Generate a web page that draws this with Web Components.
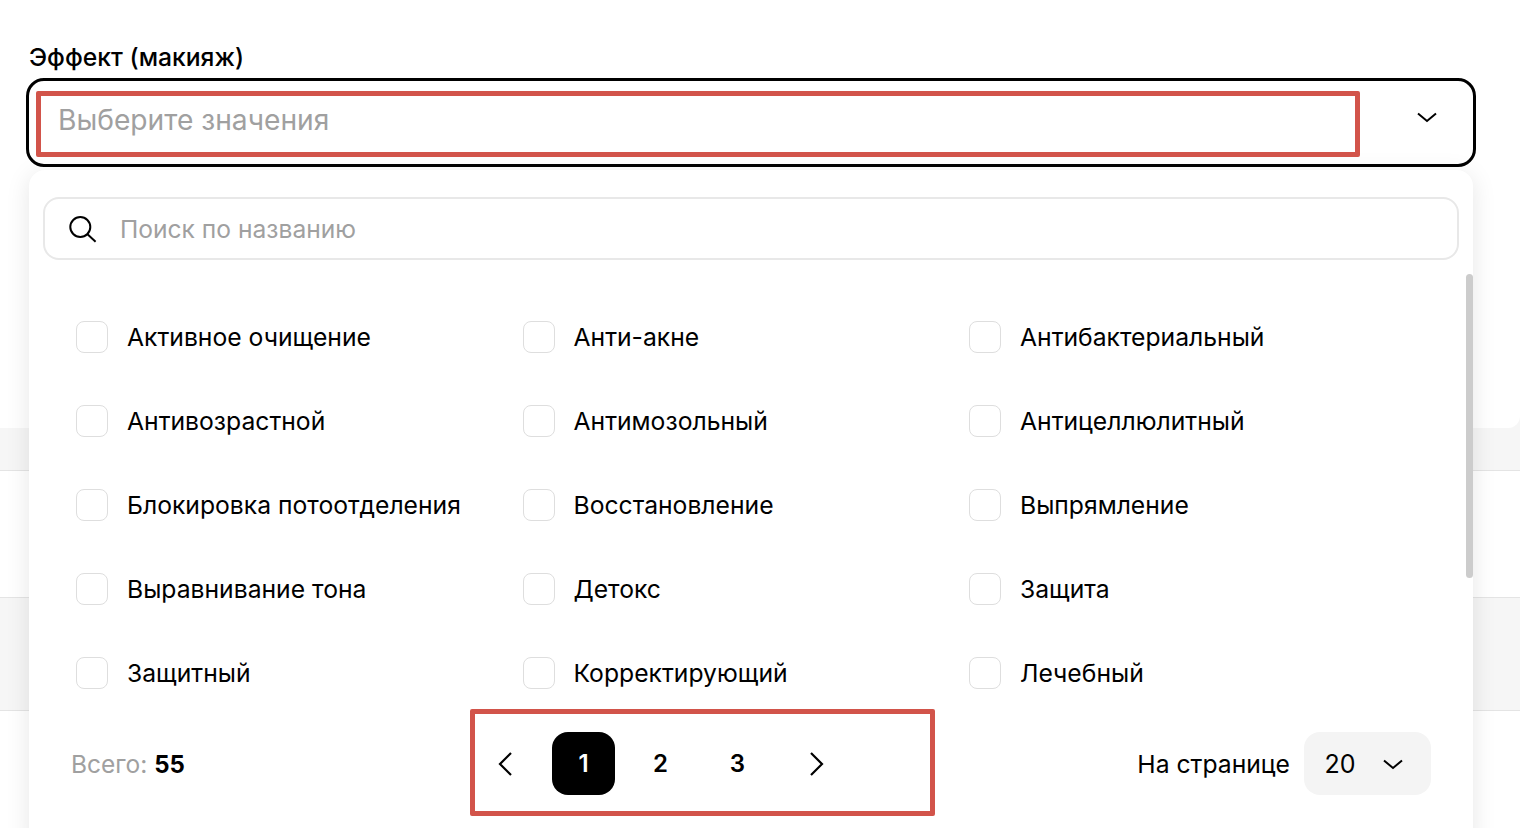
<!DOCTYPE html>
<html><head><meta charset="utf-8">
<style>
html,body{margin:0;padding:0;height:828px;overflow:hidden;background:#fff;font-family:Inter,"Liberation Sans",sans-serif;color:#000}
</style></head><body>
<template id="t-page"><style>
:host{display:block;position:relative;width:1520px;height:828px;overflow:hidden}
.bg{display:flex;flex-direction:column;padding-top:416px}
.c{height:12px;background:#f6f6f6}
.c div{height:12px;background:#fff;border-bottom-right-radius:12px}
.r{box-sizing:border-box}
.r1{height:43px;background:#f6f6f6;border-bottom:1px solid #e4e4e4}
.r2{height:127px;background:#fff;border-bottom:1px solid #e4e4e4}
.r3{height:113px;background:#f6f6f6;border-bottom:1px solid #e4e4e4}
.fg{position:absolute;inset:0;padding:43px 44px 0 26px;display:flex;flex-direction:column}
</style>
<div class="bg"><div class="c"><div></div></div><div class="r r1"></div><div class="r r2"></div><div class="r r3"></div></div>
<div class="fg"><slot></slot></div></template>

<template id="t-select"><style>
:host{display:flex;flex-direction:column}
.label{font-size:24.7px;line-height:28px;font-weight:500;margin-left:3px;margin-bottom:7px}
.box{box-sizing:border-box;height:89px;border:3px solid #000;border-radius:18px;display:flex;align-items:center;justify-content:space-between;padding:0 34.5px 0 29px;background:#fff}
.ph{font-size:28.2px;color:#a0a0a0;position:relative;top:-3px}
svg{display:block;position:relative;top:-5px}
</style>
<div class="label"><slot name="label"></slot></div>
<div class="box"><span class="ph"><slot name="ph"></slot></span>
<svg width="24" height="24" viewBox="0 0 24 24" fill="none" stroke="#000" stroke-width="2"><path d="M3 7.5 12 15l9-7.5"/></svg></div>
</template>

<template id="t-drop"><style>
:host{display:block;position:absolute;left:29px;top:170px;width:1444px;height:680px;background:#fff;border-radius:16px;box-shadow:0 4px 24px rgba(0,0,0,.1);box-sizing:border-box;padding:27px 14px 0}
.sb{position:absolute;right:0;top:104px;width:7px;height:304px;background:#ccc;border-radius:4px}
.list{padding:61px 0 0 33px;height:460px;box-sizing:border-box;display:grid;grid-template-columns:446.5px 446.5px 1fr;grid-auto-rows:84px;align-content:start;overflow:hidden}
</style><slot name="search"></slot><div class="list"><slot name="opt"></slot></div><slot name="foot"></slot><div class="sb"></div></template>

<template id="t-search"><style>
:host{display:flex;box-sizing:border-box;height:63px;border:2px solid #e8e8e8;border-radius:16px;align-items:center;padding:0 0 0 22px;gap:23px;font-size:24.6px;color:#a0a0a0;background:#fff}
svg{display:block}
</style><svg width="30" height="30" viewBox="0 0 30 30" fill="none" stroke="#000" stroke-width="2"><circle cx="13.3" cy="13" r="10"/><path d="M20.5 20.3 28.6 27.7"/></svg><span><slot></slot></span></template>

<template id="t-opt"><style>
:host{display:flex;align-items:center;gap:19px;height:32px;font-size:24.7px;white-space:nowrap;color:#000}
i{display:block;box-sizing:border-box;width:32px;height:32px;flex:none;border:1.5px solid #dedede;border-radius:8px;background:#fff}
</style><i></i><span><slot></slot></span></template>

<template id="t-foot"><style>
:host{display:block;position:absolute;left:0;right:0;top:540px;height:110px}
.row{position:relative;height:110px;background:#fff}
.total{position:absolute;left:42px;top:38px;font-size:24.5px;line-height:32px;color:#a0a0a0}
.pager{position:absolute;left:461px;top:22px;display:flex;align-items:center;height:63px}
.right{position:absolute;right:42px;top:22px;display:flex;align-items:center;gap:14px;font-size:24.7px;height:63px}
.sel{box-sizing:border-box;width:127px;height:63px;background:#f4f4f4;border-radius:16px;display:flex;align-items:center;justify-content:space-between;padding:0 26.5px 0 20.5px;font-size:25px}
svg{display:block;position:relative;top:1.5px}
</style><div class="row"><div class="total"><slot name="total"></slot></div>
<div class="pager"><slot name="pager"></slot></div>
<div class="right"><span><slot name="per"></slot></span><div class="sel"><span><slot name="num"></slot></span><svg width="24" height="24" viewBox="0 0 24 24" fill="none" stroke="#000" stroke-width="2"><path d="M3 7.5 12 15l9-7.5"/></svg></div></div></div></template>

<template id="t-pg"><style>
:host{display:flex;box-sizing:border-box;width:63px;height:63px;align-items:center;justify-content:center;font-size:24px;line-height:65px;font-weight:600;border-radius:16px;margin-right:14px;color:#000}
:host([active]){background:#000;color:#fff}
</style><span><slot></slot></span></template>

<template id="t-arrow"><style>
:host{display:flex;align-items:center;justify-content:center;width:30px;height:63px}
svg{display:block}
</style><svg width="18" height="26" viewBox="0 0 18 26" fill="none" stroke="#000" stroke-width="2.2"><path id="p" d=""/></svg></template>

<template id="t-mark"><style>
:host{display:block;position:absolute;box-sizing:border-box;border:5px solid #d2544a;border-radius:2px;pointer-events:none}
</style></template>

<rs-page>
  <rs-select>
    <span slot="label">Эффект (макияж)</span>
    <span slot="ph">Выберите значения</span>
  </rs-select>
  <rs-drop>
    <rs-search slot="search">Поиск по названию</rs-search>
    <rs-opt slot="opt">Активное очищение</rs-opt><rs-opt slot="opt">Анти-акне</rs-opt><rs-opt slot="opt">Антибактериальный</rs-opt>
    <rs-opt slot="opt">Антивозрастной</rs-opt><rs-opt slot="opt">Антимозольный</rs-opt><rs-opt slot="opt">Антицеллюлитный</rs-opt>
    <rs-opt slot="opt">Блокировка потоотделения</rs-opt><rs-opt slot="opt">Восстановление</rs-opt><rs-opt slot="opt">Выпрямление</rs-opt>
    <rs-opt slot="opt">Выравнивание тона</rs-opt><rs-opt slot="opt">Детокс</rs-opt><rs-opt slot="opt">Защита</rs-opt>
    <rs-opt slot="opt">Защитный</rs-opt><rs-opt slot="opt">Корректирующий</rs-opt><rs-opt slot="opt">Лечебный</rs-opt>
    <rs-foot slot="foot">
      <span slot="total">Всего: <b style="color:#000;font-weight:700;font-size:24px">55</b></span>
      <rs-arrow slot="pager" dir="l" style="margin-right:32px"></rs-arrow>
      <rs-pg slot="pager" active>1</rs-pg><rs-pg slot="pager">2</rs-pg><rs-pg slot="pager">3</rs-pg>
      <rs-arrow slot="pager" dir="r" style="margin-left:19px"></rs-arrow>
      <span slot="per">На странице</span><span slot="num">20</span>
    </rs-foot>
  </rs-drop>
  <rs-mark style="left:36px;top:91px;width:1324px;height:66px"></rs-mark>
  <rs-mark style="left:470px;top:709px;width:465px;height:107px"></rs-mark>
</rs-page>

<script>
function def(name,tid,init){customElements.define(name,class extends HTMLElement{constructor(){super();const s=this.attachShadow({mode:'open'});s.appendChild(document.getElementById(tid).content.cloneNode(true));}connectedCallback(){if(init)init(this)}})}
def('rs-page','t-page');def('rs-select','t-select');def('rs-drop','t-drop');def('rs-search','t-search');def('rs-opt','t-opt');def('rs-foot','t-foot');def('rs-pg','t-pg');def('rs-mark','t-mark');
def('rs-arrow','t-arrow',el=>{el.shadowRoot.getElementById('p').setAttribute('d',el.getAttribute('dir')==='l'?'M15 2 4 13l11 11':'M3 2l11 11L3 24')});
</script>
</body></html>
